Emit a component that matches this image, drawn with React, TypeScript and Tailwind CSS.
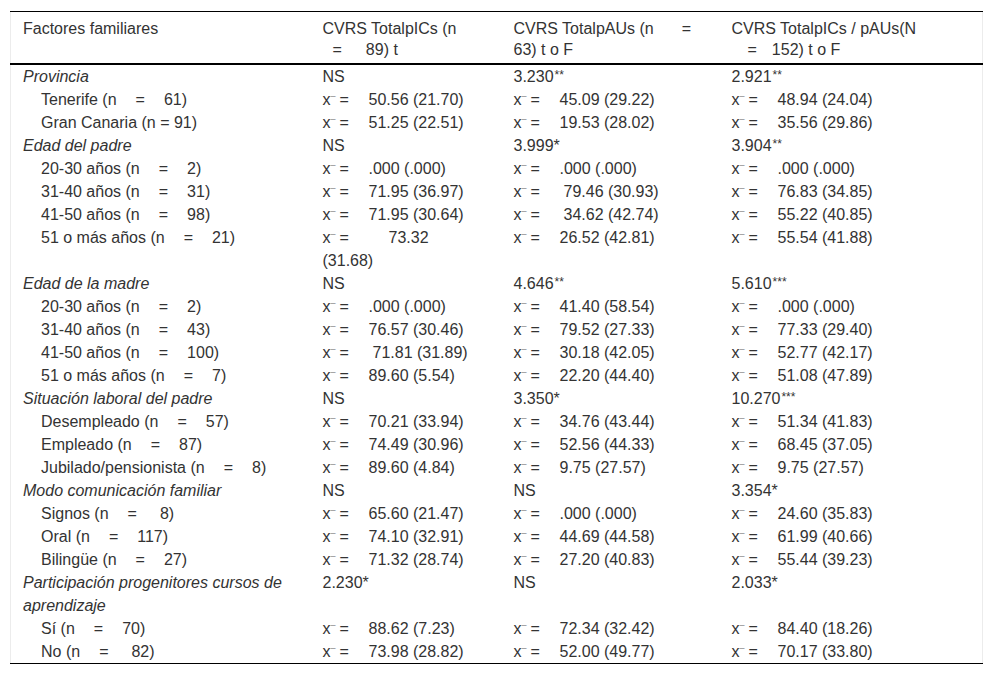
import type { ReactNode } from "react";

function Xbar({ v, pad = "" }: { v: string; pad?: string }) {
  return (
    <span className="whitespace-nowrap">
      <span className="inline-block w-[46px]">
        x<sup className="relative -top-[2px] text-[9px]">¯</sup>
        <span className="ml-[4px]">=</span>
      </span>
      <span className={pad}>{v}</span>
    </span>
  );
}

function Stars({ v, s }: { v: string; s: string }) {
  return (
    <span>
      {v}
      <sup className="relative -top-[3px] ml-[1px] text-[12px] leading-none">{s}</sup>
    </span>
  );
}

function N({ label, n, gap = "" }: { label: string; n: string; gap?: string }) {
  return (
    <span className="whitespace-nowrap">
      {label} (n<span className="mx-[19px] inline-block">=</span>
      <span className={gap}>{n})</span>
    </span>
  );
}

type Row = {
  label: ReactNode;
  group?: boolean;
  cells: ReactNode[];
};

const rows: Row[] = [
  { label: "Provincia", group: true, cells: ["NS", <Stars v="3.230" s="**" />, <Stars v="2.921" s="**" />] },
  { label: <N label="Tenerife" n="61" />, cells: [<Xbar v="50.56 (21.70)" />, <Xbar v="45.09 (29.22)" />, <Xbar v="48.94 (24.04)" />] },
  { label: "Gran Canaria (n = 91)", cells: [<Xbar v="51.25 (22.51)" />, <Xbar v="19.53 (28.02)" />, <Xbar v="35.56 (29.86)" />] },
  { label: "Edad del padre", group: true, cells: ["NS", "3.999*", <Stars v="3.904" s="**" />] },
  { label: <N label="20-30 años" n="2" />, cells: [<Xbar v=".000 (.000)" />, <Xbar v=".000 (.000)" />, <Xbar v=".000 (.000)" />] },
  { label: <N label="31-40 años" n="31" />, cells: [<Xbar v="71.95 (36.97)" />, <Xbar v="79.46 (30.93)" pad="pl-[4px]" />, <Xbar v="76.83 (34.85)" />] },
  { label: <N label="41-50 años" n="98" />, cells: [<Xbar v="71.95 (30.64)" />, <Xbar v="34.62 (42.74)" pad="pl-[4px]" />, <Xbar v="55.22 (40.85)" />] },
  {
    label: <N label="51 o más años" n="21" />,
    cells: [
      <>
        <Xbar v="73.32" pad="pl-[20px]" />
        <br />
        (31.68)
      </>,
      <Xbar v="26.52 (42.81)" />,
      <Xbar v="55.54 (41.88)" />,
    ],
  },
  { label: "Edad de la madre", group: true, cells: ["NS", <Stars v="4.646" s="**" />, <Stars v="5.610" s="***" />] },
  { label: <N label="20-30 años" n="2" />, cells: [<Xbar v=".000 (.000)" />, <Xbar v="41.40 (58.54)" />, <Xbar v=".000 (.000)" />] },
  { label: <N label="31-40 años" n="43" />, cells: [<Xbar v="76.57 (30.46)" />, <Xbar v="79.52 (27.33)" />, <Xbar v="77.33 (29.40)" />] },
  { label: <N label="41-50 años" n="100" />, cells: [<Xbar v="71.81 (31.89)" pad="pl-[4px]" />, <Xbar v="30.18 (42.05)" />, <Xbar v="52.77 (42.17)" />] },
  { label: <N label="51 o más años" n="7" />, cells: [<Xbar v="89.60 (5.54)" />, <Xbar v="22.20 (44.40)" />, <Xbar v="51.08 (47.89)" />] },
  { label: "Situación laboral del padre", group: true, cells: ["NS", "3.350*", <Stars v="10.270" s="***" />] },
  { label: <N label="Desempleado" n="57" />, cells: [<Xbar v="70.21 (33.94)" />, <Xbar v="34.76 (43.44)" />, <Xbar v="51.34 (41.83)" />] },
  { label: <N label="Empleado" n="87" />, cells: [<Xbar v="74.49 (30.96)" />, <Xbar v="52.56 (44.33)" />, <Xbar v="68.45 (37.05)" />] },
  { label: <N label="Jubilado/pensionista" n="8" />, cells: [<Xbar v="89.60 (4.84)" />, <Xbar v="9.75 (27.57)" />, <Xbar v="9.75 (27.57)" />] },
  { label: "Modo comunicación familiar", group: true, cells: ["NS", "NS", "3.354*"] },
  { label: <N label="Signos" n="8" gap="pl-[4px]" />, cells: [<Xbar v="65.60 (21.47)" />, <Xbar v=".000 (.000)" />, <Xbar v="24.60 (35.83)" />] },
  { label: <N label="Oral" n="117" />, cells: [<Xbar v="74.10 (32.91)" />, <Xbar v="44.69 (44.58)" />, <Xbar v="61.99 (40.66)" />] },
  { label: <N label="Bilingüe" n="27" />, cells: [<Xbar v="71.32 (28.74)" />, <Xbar v="27.20 (40.83)" />, <Xbar v="55.44 (39.23)" />] },
  {
    label: (
      <>
        Participación progenitores cursos de
        <br />
        aprendizaje
      </>
    ),
    group: true,
    cells: ["2.230*", "NS", "2.033*"],
  },
  { label: <N label="Sí" n="70" />, cells: [<Xbar v="88.62 (7.23)" />, <Xbar v="72.34 (32.42)" />, <Xbar v="84.40 (18.26)" />] },
  { label: <N label="No" n="82" gap="pl-[4px]" />, cells: [<Xbar v="73.98 (28.82)" />, <Xbar v="52.00 (49.77)" />, <Xbar v="70.17 (33.80)" />] },
];

export default function App() {
  return (
    <div className="min-h-[677px] bg-white pt-[11px] pl-[10px] font-['Liberation_Sans',Arial,sans-serif] text-[16px] text-[#333]">
      <table className="w-[972px] table-fixed border-collapse border-x border-[#ececec]">
        <colgroup>
          <col className="w-[300px]" />
          <col className="w-[191px]" />
          <col className="w-[218px]" />
          <col className="w-[263px]" />
        </colgroup>
        <thead>
          <tr className="border-t border-b-2 border-t-black border-b-black align-top leading-[21px]">
            <th className="pt-[6px] pb-[3px] pl-[12px] text-left font-normal">Factores familiares</th>
            <th className="pt-[6px] pb-[3px] pl-[12px] text-left font-normal">
              CVRS TotalpICs (n
              <br />
              <span className="ml-[10px] mr-[24px] inline-block">=</span>89) t
            </th>
            <th className="pt-[6px] pb-[3px] pl-[12px] text-left font-normal">
              CVRS TotalpAUs (n<span className="ml-[28px] inline-block">=</span>
              <br />
              63) t o F
            </th>
            <th className="pt-[6px] pb-[3px] pl-[12px] text-left font-normal">
              CVRS TotalpICs / pAUs(N
              <br />
              <span className="ml-[16px] mr-[15px] inline-block">=</span>152) t o F
            </th>
          </tr>
        </thead>
        <tbody className="border-b border-black">
          {rows.map((r, i) => (
            <tr key={i} className="align-top leading-[23px]">
              <td className={r.group ? "pl-[12px] italic" : "pl-[30px]"}>{r.label}</td>
              {r.cells.map((c, j) => (
                <td key={j} className="pl-[12px]">
                  {c}
                </td>
              ))}
            </tr>
          ))}
        </tbody>
      </table>
    </div>
  );
}
